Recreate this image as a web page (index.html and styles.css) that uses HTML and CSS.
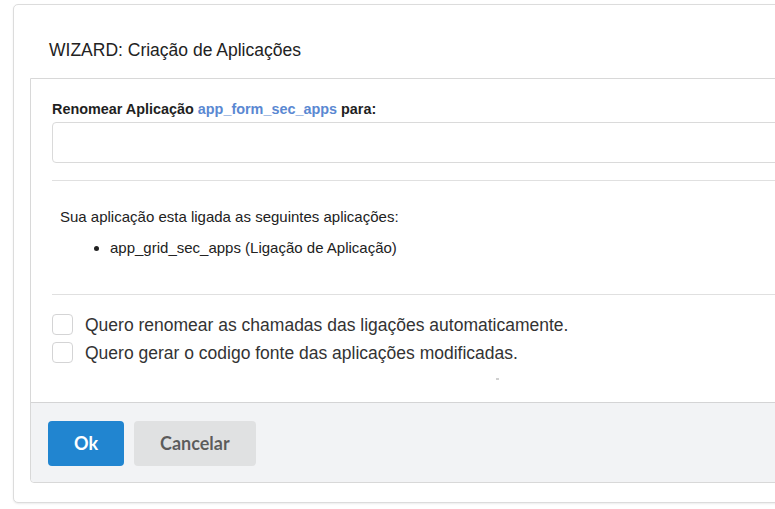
FILE: index.html
```html
<!DOCTYPE html>
<html lang="pt">
<head>
<meta charset="utf-8">
<title>WIZARD: Criação de Aplicações</title>
<link rel="stylesheet" href="styles.css">
</head>
<body>
<div class="card">
  <h1 class="card-title">WIZARD: Criação de Aplicações</h1>
  <div class="panel">
    <div class="panel-body">
      <label class="field-label" for="newname">Renomear Aplicação <span class="app-name">app_form_sec_apps</span> para:</label>
      <input class="text-input" id="newname" type="text">
      <hr class="divider">
      <div class="info">
        <p class="info-text">Sua aplicação esta ligada as seguintes aplicações:</p>
        <ul class="link-list">
          <li>app_grid_sec_apps (Ligação de Aplicação)</li>
        </ul>
      </div>
      <hr class="divider divider-2">
      <div class="checks">
        <label class="check-row"><span class="checkbox"></span><span class="check-text">Quero renomear as chamadas das ligações automaticamente.</span></label>
        <label class="check-row"><span class="checkbox"></span><span class="check-text">Quero gerar o codigo fonte das aplicações modificadas.</span></label>
      </div>
      <div class="tick"></div>
    </div>
    <div class="panel-footer">
      <button class="btn btn-primary" type="button">Ok</button>
      <button class="btn btn-secondary" type="button">Cancelar</button>
    </div>
  </div>
</div>
</body>
</html>
```

FILE: styles.css
```css
html, body {
  margin: 0;
  padding: 0;
  background: #ffffff;
  overflow: hidden;
}

body {
  width: 775px;
  height: 509px;
  font-family: "Liberation Sans", Arial, sans-serif;
  color: #333333;
}

.card {
  margin: 4px 0 0 13px;
  width: 1100px;
  border: 1px solid #dcdcdc;
  border-radius: 5px;
  background: #ffffff;
  box-shadow: 0 1px 2px rgba(0, 0, 0, 0.08);
  padding: 0 0 19px 16px;
}

.card-title {
  margin: 0;
  padding: 35px 0 18px 19px;
  font-size: 17.5px;
  line-height: 20px;
  font-weight: normal;
  color: #222222;
}

.panel {
  border: 1px solid #d8d8d8;
  border-radius: 0 0 4px 4px;
  background: #ffffff;
}

.panel-body {
  padding: 22px 0 0 21px;
}

.field-label {
  display: block;
  font-size: 14.4px;
  line-height: 16px;
  font-weight: bold;
  color: #1f1f1f;
}

.app-name {
  color: #5a88d2;
}

.text-input {
  display: block;
  box-sizing: border-box;
  margin: 5px 0 0 0;
  width: 1000px;
  height: 41px;
  border: 1px solid #dadada;
  border-radius: 4px;
  background: #ffffff;
  padding: 0 10px;
  font: 14px "Liberation Sans", Arial, sans-serif;
  outline: none;
}

.divider {
  margin: 17px 0 0 0;
  border: 0;
  border-top: 1px solid #e0e0e0;
  height: 0;
}

.info {
  padding: 27px 0 0 8px;
  font-size: 15px;
  line-height: 17px;
  color: #222222;
}

.info-text {
  margin: 0;
}

.link-list {
  margin: 14px 0 0 0;
  padding: 0 0 0 50px;
}

.divider-2 {
  margin-top: 38px;
}

.checks {
  display: flex;
  flex-direction: column;
  gap: 8px;
  padding-top: 19px;
}

.check-row {
  display: flex;
  align-items: flex-start;
  gap: 12px;
  height: 20px;
}

.checkbox {
  box-sizing: border-box;
  flex: none;
  width: 21px;
  height: 21px;
  border: 1px solid #d4d4d5;
  border-radius: 4px;
  background: #ffffff;
}

.check-text {
  font-size: 17.5px;
  line-height: 20px;
  padding-top: 1px;
  color: #333333;
}

.tick {
  width: 3px;
  height: 2px;
  background: #d0d0d0;
  margin: 16px 0 22px 444px;
}

.panel-footer {
  border-top: 1px solid #d4d4d5;
  background: #f2f3f5;
  padding: 18px 0 16px 17px;
  display: flex;
  gap: 10px;
  border-radius: 0 0 4px 4px;
}

.btn {
  box-sizing: border-box;
  height: 45px;
  padding: 0 26px;
  border: 0;
  border-radius: 4px;
  font-family: Lato, "Liberation Sans", sans-serif;
  font-weight: bold;
  font-size: 18px;
  line-height: 45px;
  cursor: pointer;
}

.btn-primary {
  background: #2185d0;
  color: #ffffff;
}

.btn-secondary {
  background: #e0e1e2;
  color: rgba(0, 0, 0, 0.6);
}
```
